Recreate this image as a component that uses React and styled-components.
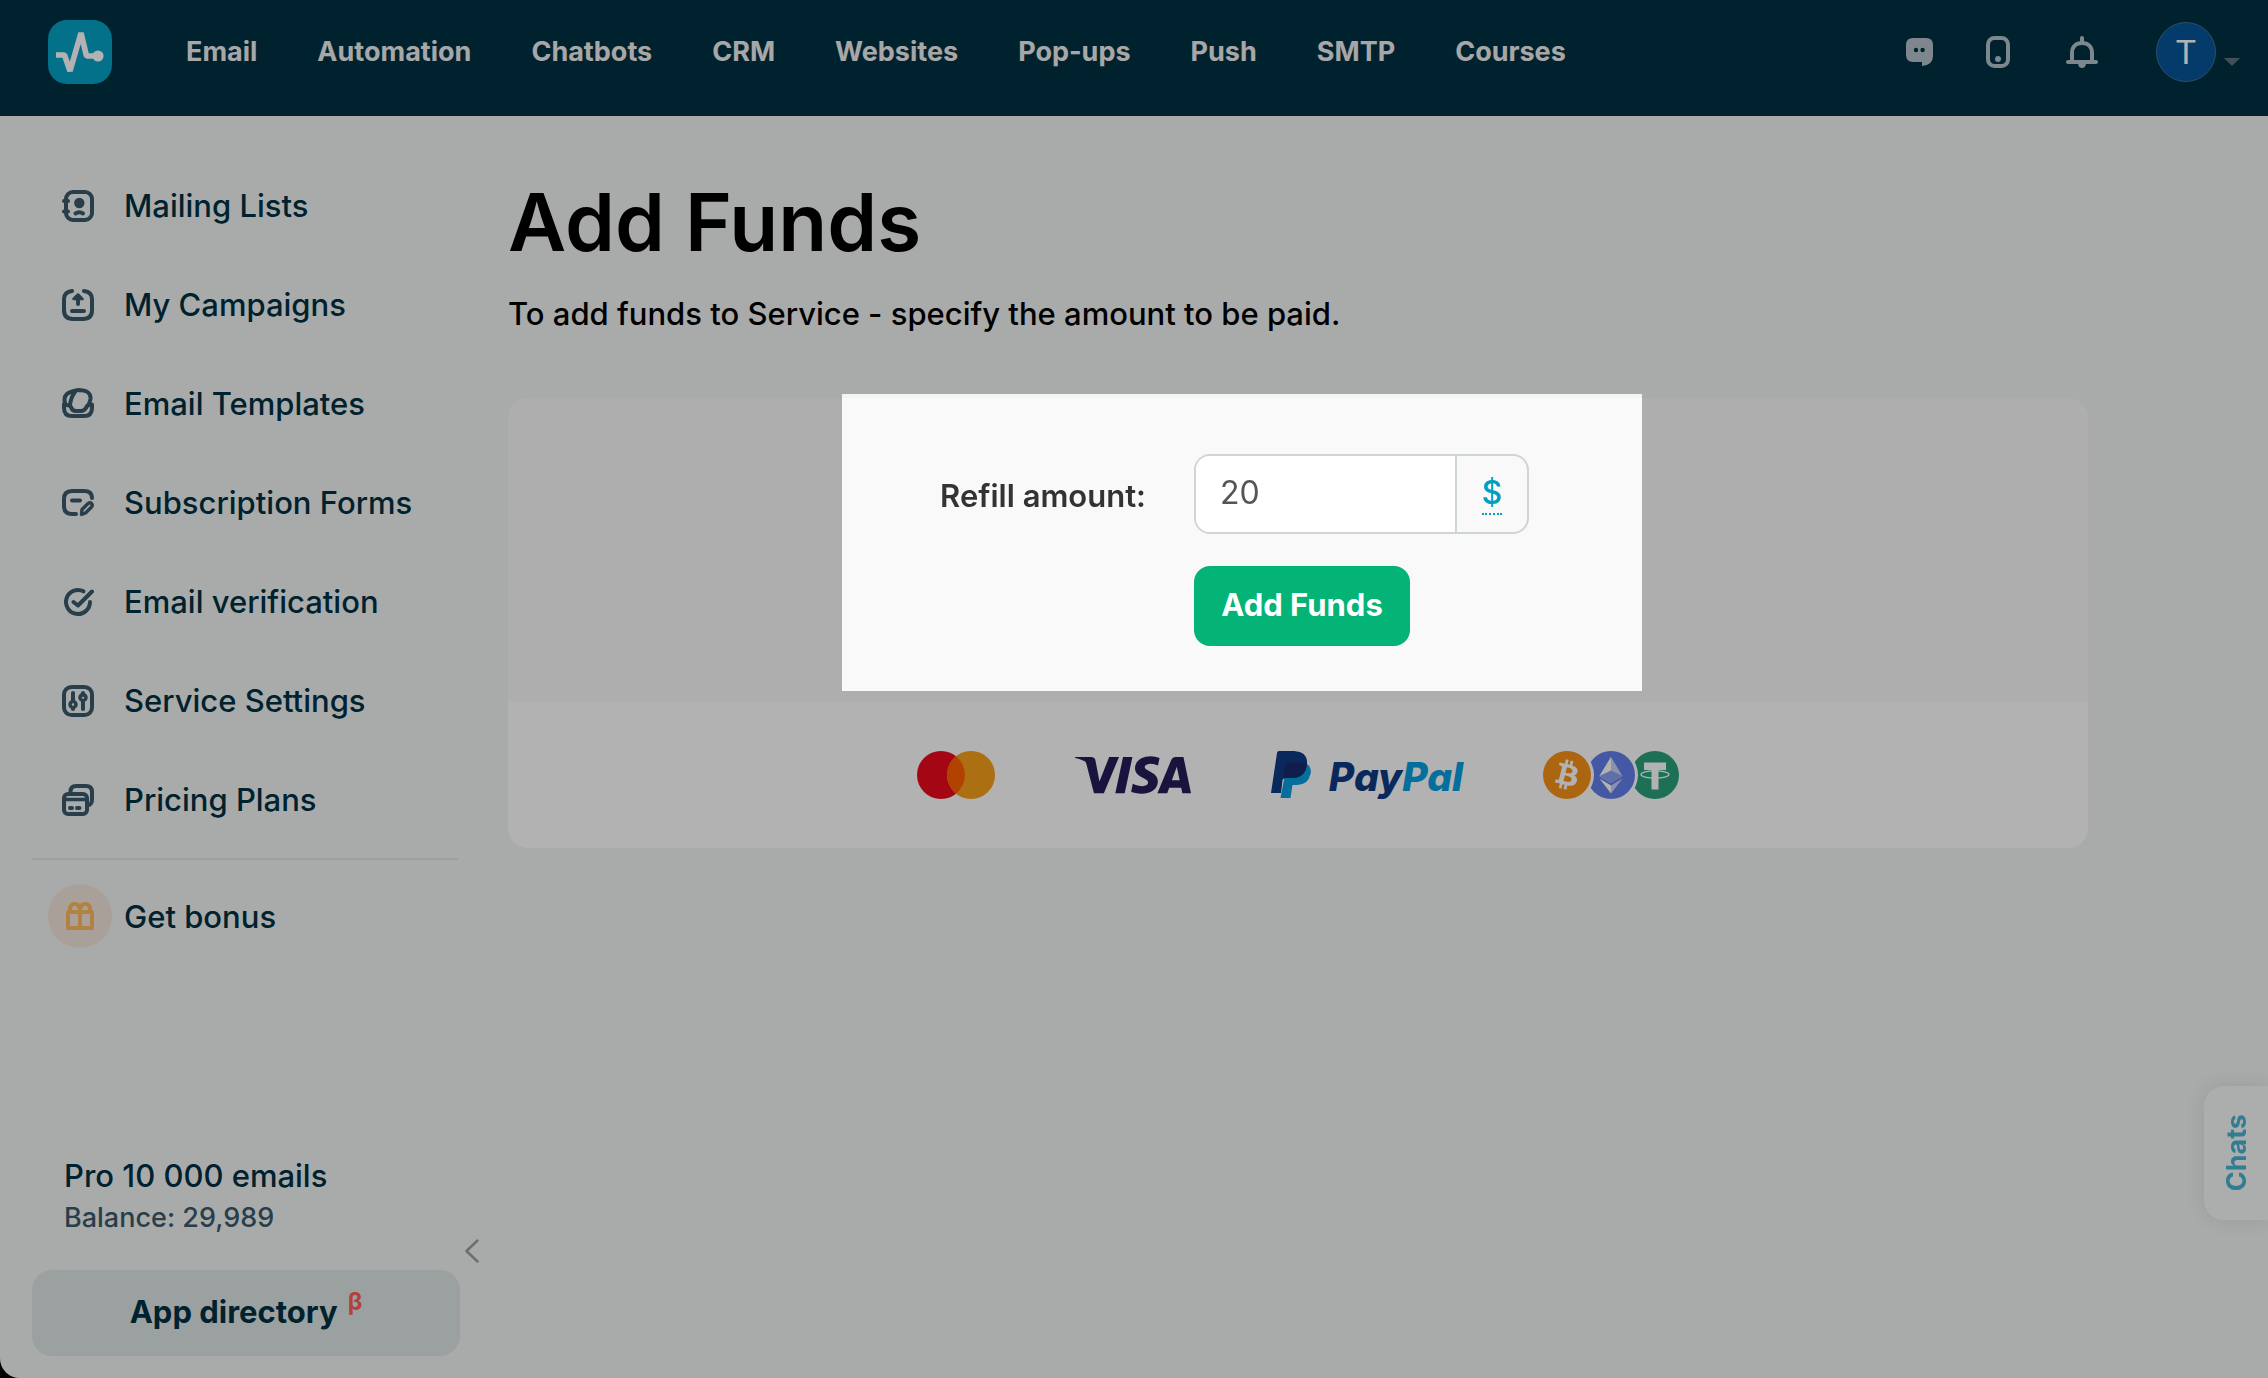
import React from "react";
import styled, { createGlobalStyle } from "styled-components";
import { SiBitcoin, SiVisa } from "react-icons/si";

const GlobalStyle = createGlobalStyle`
  *, *::before, *::after {
    box-sizing: border-box;
  }

  body {
    margin: 0;
    background: #000;
    font-family: Inter, "Liberation Sans", sans-serif;
    font-size: 31px;
    font-weight: 500;
    color: #000;
  }

  a {
    color: inherit;
    text-decoration: none;
  }

  button, input {
    font-family: inherit;
  }

  svg {
    display: block;
    flex: none;
  }
`;

const Page = styled.div`
  display: flex;
  flex-direction: column;
  min-height: 100vh;
  overflow: hidden;
  background: #f2f5f4;
  border-bottom-left-radius: 20px;
`;

/* ---------- header ---------- */

const Header = styled.header`
  display: flex;
  align-items: center;
  height: 116px;
  padding: 0 28px 12px 48px;
  background: #013142;
`;

const TopNav = styled.nav`
  display: flex;
  gap: 60px;
  margin-left: 74px;
  font-size: 27px;
  font-weight: 700;
  line-height: 40px;
  color: #f0f0f0;
`;

const Tools = styled.div`
  display: flex;
  align-items: center;
  gap: 50px;
  margin-left: auto;
`;

const IconButton = styled.button`
  padding: 0;
  border: 0;
  background: none;
  color: ${(props) => props.$color || "#b5c2cb"};
  cursor: pointer;
`;

const Account = styled(IconButton)`
  display: flex;
  align-items: center;
  gap: 8px;
  margin-left: 8px;
`;

const Avatar = styled.span`
  display: grid;
  place-items: center;
  width: 60px;
  height: 60px;
  border: 1px solid #3a709c;
  border-radius: 50%;
  background: #07559a;
  color: #fff;
  font-family: Roboto, sans-serif;
  font-size: 34px;
  font-weight: 400;
`;

const Caret = styled.span`
  margin-top: 20px;
  border: 8px solid transparent;
  border-top-color: #5f727d;
  border-bottom: 0;
`;

/* ---------- sidebar ---------- */

const Body = styled.div`
  display: flex;
  flex: 1;
`;

const Sidebar = styled.aside`
  display: flex;
  flex: none;
  flex-direction: column;
  width: 508px;
  padding: 40px 48px 22px 32px;
  color: #003042;
`;

const Menu = styled.nav`
  display: flex;
  flex-direction: column;
`;

const MenuItem = styled.a`
  display: flex;
  align-items: center;
  gap: 30px;
  height: 99px;
  padding-left: 30px;

  svg {
    color: #3a596c;
  }
`;

const Divider = styled.hr`
  width: 426px;
  height: 2px;
  margin: 9px 0 24px;
  border: 0;
  background: #e1e4e4;
`;

const Bonus = styled.a`
  display: flex;
  align-items: center;
  gap: 12px;
  padding-left: 16px;
`;

const BonusIcon = styled.span`
  display: grid;
  place-items: center;
  width: 64px;
  height: 64px;
  border-radius: 50%;
  background: #f3e6dc;
  color: #ffbb5c;
`;

const Plan = styled.div`
  display: flex;
  align-items: flex-end;
  justify-content: space-between;
  width: 448px;
  margin-top: auto;
  padding-left: 32px;
`;

const PlanText = styled.div`
  padding-bottom: 32px;
  line-height: 44px;
`;

const Balance = styled.div`
  font-size: 27px;
  line-height: 40px;
  color: #3a596c;
`;

const Collapse = styled(IconButton)`
  padding-bottom: 7px;
`;

const Directory = styled.a`
  display: flex;
  align-items: center;
  justify-content: center;
  gap: 10px;
  width: 428px;
  height: 86px;
  padding-bottom: 4px;
  border-radius: 20px;
  background: #dfe7e7;
  font-weight: 700;

  sup {
    align-self: flex-start;
    margin-top: 14px;
    font-size: 24px;
    line-height: 36px;
    color: #fb6052;
  }
`;

/* ---------- content ---------- */

const Main = styled.main`
  flex: 1;
  padding: 60px 180px 60px 0;
`;

const Title = styled.h1`
  margin: 0;
  font-size: 80px;
  font-weight: 600;
  line-height: 92px;
`;

const Lead = styled.p`
  margin: 24px 0 62px;
  line-height: 44px;
`;

const Card = styled.section`
  border-radius: 20px;
  background: #fff;
`;

const CardTop = styled.div`
  display: flex;
  justify-content: center;
  height: 304px;
  padding-right: 112px;
  border-radius: 20px 20px 0 0;
  background: #f9f9f9;
`;

/* everything outside of the form is dimmed by its shadow */
const Spotlight = styled.form`
  position: relative;
  z-index: 10;
  display: grid;
  grid-template-columns: 304px auto;
  align-content: start;
  justify-content: start;
  gap: 32px 48px;
  width: 800px;
  height: 297px;
  margin-top: -4px;
  padding-top: 60px;
  box-shadow: 0 0 0 4000px rgba(0, 0, 0, 0.3);
`;

const Label = styled.label`
  align-self: center;
  padding-top: 4px;
  text-align: right;
  font-weight: 600;
  line-height: 44px;
  color: #333;
`;

const AmountGroup = styled.div`
  display: flex;
  width: 335px;
  height: 80px;
  overflow: hidden;
  border: 2px solid #cdd5d5;
  border-radius: 16px;
`;

const AmountInput = styled.input`
  flex: 1;
  min-width: 0;
  padding: 0 24px 4px;
  border: 0;
  border-right: 2px solid #cdd5d5;
  outline: 0;
  background: #fff;
  font-size: 32px;
  color: #555;
`;

const Currency = styled.button`
  width: 70px;
  padding: 0;
  border: 0;
  background: none;
  font-size: 32px;
  font-weight: 500;
  color: #009fc1;

  span {
    display: inline-block;
    line-height: 40px;
    border-bottom: 2px dotted #009fc1;
  }
`;

const Submit = styled.button`
  grid-column: 2;
  justify-self: start;
  width: 216px;
  height: 80px;
  padding: 0 0 4px;
  border: 0;
  border-radius: 16px;
  background: #04b376;
  color: #fff;
  font-size: 31px;
  font-weight: 700;
`;

const Payments = styled.div`
  display: flex;
  align-items: center;
  justify-content: center;
  gap: 80px;
  height: 146px;
`;

const PayPal = styled.div`
  display: flex;
  align-items: center;
  gap: 18px;
  font-size: 39px;
  font-style: italic;
  font-weight: 800;
  line-height: 48px;
  color: #0e3b86;

  span {
    padding-top: 4px;
  }

  em {
    color: #06a0e0;
  }
`;

const Chats = styled.button`
  position: fixed;
  right: 0;
  bottom: 158px;
  display: grid;
  place-items: center;
  width: 64px;
  height: 134px;
  padding: 0;
  border: 0;
  border-radius: 20px 0 0 20px;
  background: #f7f8f8;
  box-shadow: 0 0 20px rgba(0, 40, 60, 0.1);
  color: #49b4d2;
  font-size: 27px;
  font-weight: 700;

  span {
    writing-mode: vertical-rl;
    transform: rotate(180deg);
  }
`;

/* ---------- icons ---------- */

const Icon = ({ size = 32, width = size, height = size, children }) => (
  <svg
    width={width}
    height={height}
    viewBox={`0 0 ${width} ${height}`}
    fill="none"
    stroke="currentColor"
    strokeWidth="4"
    strokeLinecap="round"
    strokeLinejoin="round"
    aria-hidden="true"
  >
    {children}
  </svg>
);

const Logo = () => (
  <svg width="64" height="64" viewBox="0 0 64 64" role="img" aria-label="Home">
    <rect width="64" height="64" rx="19" fill="#06a2c6" />
    <path d="M8 35H16.5L22 51L33 13L38.5 36H48" fill="none" stroke="#fff" strokeWidth="5.6" strokeLinejoin="bevel" />
    <circle cx="50" cy="36" r="5.6" fill="#fff" />
  </svg>
);

const ChatIcon = () => (
  <Icon>
    <path
      d="M11 2H24Q31 2 31 9V20Q31 29 20 30V26H11Q4 26 4 19V9Q4 2 11 2Z"
      fill="currentColor"
      stroke="none"
    />
    <circle cx="14" cy="14" r="2.2" fill="#013142" stroke="none" />
    <circle cx="20.6" cy="14" r="2.2" fill="#013142" stroke="none" />
  </Icon>
);

const PhoneIcon = () => (
  <Icon>
    <rect x="4" y="2" width="20" height="28" rx="6.5" />
    <circle cx="14" cy="23" r="3" fill="currentColor" stroke="none" />
  </Icon>
);

const BellIcon = () => (
  <Icon>
    <path d="M2 26H30M6 25V17C6 11 10 7 16 7S26 11 26 17V25M16 2V6" />
    <path d="M12 27H20C20 30 18.500 32 16 32S12 30 12 27Z" fill="currentColor" stroke="none" />
  </Icon>
);

const ListsIcon = () => (
  <Icon>
    <rect x="4" y="2" width="26" height="28" rx="7" />
    <path d="M2 11H6M2 21.500H6M13.500 23.500Q17.300 21 21 23.500" />
    <circle cx="17.3" cy="13" r="5.2" fill="currentColor" stroke="none" />
  </Icon>
);

const CampaignsIcon = () => (
  <Icon>
    <path d="M10 2Q2 3 2 10V21Q2 30 11 30H21Q30 30 30 21V10Q30 3 22 2" />
    <path d="M10 22H22M16 8V15" />
    <path d="M16 5.500L20.500 10H11.500Z" fill="currentColor" strokeWidth="2.500" />
  </Icon>
);

const TemplatesIcon = () => (
  <Icon>
    <path d="M2 16V20Q2 28 10 28H22Q30 28 30 20V16.500H28Q25 17 24 20Q22 23 19 23H14Q10 23 9 19Q8 17 4 17" />
    <path d="M3 15C1 7 5 4 16 2C25 2 29 5 28.500 11L27 16M13 4Q9 9 8 17" />
  </Icon>
);

const FormsIcon = () => (
  <Icon>
    <path d="M14 27H10Q2 27 2 19V12Q2 4 10 4H22Q30 4 30 11" />
    <path d="M10 13.500H18" />
    <path d="M19.500 27.500L20 22.500L26 16.500Q28 15 29.500 16.500Q31 18 29.500 20L23.500 26Z" strokeWidth="3.400" />
  </Icon>
);

const VerifyIcon = () => (
  <Icon>
    <path d="M21.500 5.300A12 12 0 1 0 28 16" />
    <path d="M11.500 16L16 19.500L30 5.500" />
  </Icon>
);

const SettingsIcon = () => (
  <Icon>
    <rect x="2" y="2" width="28" height="28" rx="7.5" />
    <path d="M11 8V16M11 23V24M21 8V10M21 16V24" />
    <circle cx="11" cy="19.500" r="3" strokeWidth="3.500" />
    <circle cx="21" cy="12.500" r="3" strokeWidth="3.500" />
  </Icon>
);

const PricingIcon = () => (
  <Icon>
    <path d="M8.500 8Q8.500 2 14 2H24Q30 2 30 8V15Q30 20 27 21" />
    <rect x="2" y="10" width="23" height="20" rx="4" />
    <path d="M3 15.500H24" strokeWidth="3.500" />
    <path d="M8 24H10M15 24H17.500" />
  </Icon>
);

const GiftIcon = () => (
  <Icon size={28}>
    <path d="M2 10H26V26H2ZM14 10V26" />
    <path d="M14 9C14 4 12 2 8.500 2Q4 2 4 8M14 9C14 4 16 2 19.500 2Q24 2 24 8" />
  </Icon>
);

const Mastercard = () => (
  <svg width="78" height="48" viewBox="0 0 78 48" role="img" aria-label="Mastercard">
    <circle cx="24" cy="24" r="24" fill="#eb0a1e" />
    <circle cx="54" cy="24" r="24" fill="#f79f1a" />
    <path d="M39 5.300A24 24 0 0 1 39 42.700A24 24 0 0 1 39 5.300Z" fill="#ff5f00" />
  </svg>
);

const PayPalMark = () => (
  <svg width="40" height="48" viewBox="0 0 40 48" aria-hidden="true">
    <path d="M16 13H36Q41 17 39.500 23Q37 34 26 34H21.500L19.500 47H9.500Z" fill="#06a0e0" />
    <path d="M8 0H23Q37 1 36 13Q34 27 21 27H14Q12 27 11.500 29L10 42H0L6 2Q6.300 0 8 0Z" fill="#0e3b86" />
    <path d="M16 11.500H35.900Q35.500 27 21 27H14Q12.500 27 12 28.500L14 14Q14.300 11.800 16 11.500Z" fill="#192c6e" />
  </svg>
);

const Crypto = () => (
  <svg width="136" height="48" viewBox="0 0 136 48" role="img" aria-label="Bitcoin, Ethereum, Tether">
    <circle cx="112" cy="24" r="24" fill="#2aa17b" />
    <path d="M101 11.500H123V19H115.500V38.500H108.500V19H101Z" fill="#fff" />
    <ellipse cx="112" cy="23.500" rx="14" ry="3.600" fill="none" stroke="#fff" strokeWidth="1.300" />
    <circle cx="68" cy="24" r="27" fill="#fff" />
    <circle cx="68" cy="24" r="24" fill="#627eea" />
    <path d="M68 6L79.500 25L68 32L56.500 25Z" fill="#c8d1f7" />
    <path d="M68 6V32L56.500 25Z" fill="#fff" />
    <path d="M68 19.500L79.500 25L68 32L56.500 25Z" fill="#8a9ff0" />
    <path d="M68 34.500L79.500 27.500L68 42.500Z" fill="#c8d1f7" />
    <path d="M68 34.500L56.500 27.500L68 42.500Z" fill="#fff" />
    <circle cx="24" cy="24" r="27" fill="#fff" />
    <SiBitcoin x="0" y="0" size={48} color="#f7931a" />
  </svg>
);

const topLinks = ["Email", "Automation", "Chatbots", "CRM", "Websites", "Pop-ups", "Push", "SMTP", "Courses"];

const menu = [
  { label: "Mailing Lists", icon: ListsIcon },
  { label: "My Campaigns", icon: CampaignsIcon },
  { label: "Email Templates", icon: TemplatesIcon },
  { label: "Subscription Forms", icon: FormsIcon },
  { label: "Email verification", icon: VerifyIcon },
  { label: "Service Settings", icon: SettingsIcon },
  { label: "Pricing Plans", icon: PricingIcon },
];

export default () => (
  <>
    <GlobalStyle />
    <Page>
      <Header>
        <a href="#home"><Logo /></a>
        <TopNav>
          {topLinks.map((link) => (
            <a key={link} href={`#${link.toLowerCase()}`}>{link}</a>
          ))}
        </TopNav>
        <Tools>
          <IconButton type="button" aria-label="Messages"><ChatIcon /></IconButton>
          <IconButton type="button" aria-label="Mobile app"><PhoneIcon /></IconButton>
          <IconButton type="button" aria-label="Notifications"><BellIcon /></IconButton>
          <Account type="button" aria-label="Account">
            <Avatar>T</Avatar>
            <Caret />
          </Account>
        </Tools>
      </Header>

      <Body>
        <Sidebar>
          <Menu>
            {menu.map(({ label, icon: ItemIcon }) => (
              <MenuItem key={label} href="#menu">
                <ItemIcon />
                {label}
              </MenuItem>
            ))}
          </Menu>
          <Divider />
          <Bonus href="#bonus">
            <BonusIcon><GiftIcon /></BonusIcon>
            Get bonus
          </Bonus>
          <Plan>
            <PlanText>
              Pro 10 000 emails
              <Balance>Balance: 29,989</Balance>
            </PlanText>
            <Collapse type="button" aria-label="Collapse menu" $color="#9da0a0">
              <Icon width={16} height={24}>
                <path d="M13.500 1.500L2.500 12L13.500 22.500" strokeWidth="2.500" />
              </Icon>
            </Collapse>
          </Plan>
          <Directory href="#apps">
            App directory<sup>β</sup>
          </Directory>
        </Sidebar>

        <Main>
          <Title>Add Funds</Title>
          <Lead>To add funds to Service - specify the amount to be paid.</Lead>
          <Card>
            <CardTop>
              <Spotlight onSubmit={(e) => e.preventDefault()}>
                <Label htmlFor="amount">Refill amount:</Label>
                <AmountGroup>
                  <AmountInput id="amount" type="text" defaultValue="20" />
                  <Currency type="button"><span>$</span></Currency>
                </AmountGroup>
                <Submit type="submit">Add Funds</Submit>
              </Spotlight>
            </CardTop>
            <Payments>
              <Mastercard />
              <SiVisa size={116} height={38} color="#231e5a" viewBox="0 8 24 8" title="Visa" />
              <PayPal>
                <PayPalMark />
                <span>Pay<em>Pal</em></span>
              </PayPal>
              <Crypto />
            </Payments>
          </Card>
        </Main>
      </Body>
      <Chats type="button"><span>Chats</span></Chats>
    </Page>
  </>
);
